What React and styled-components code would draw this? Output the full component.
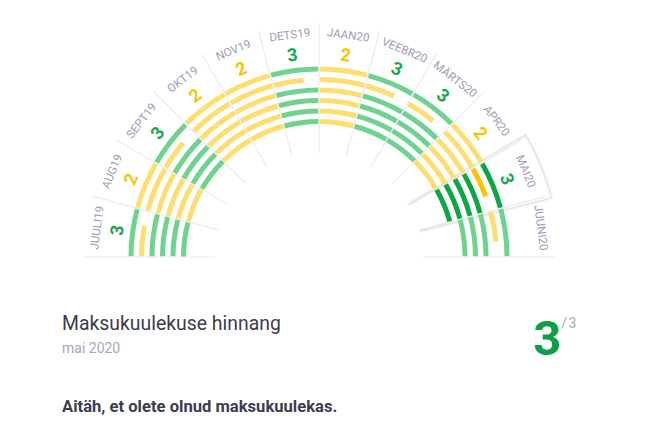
import React from 'react'
import styled, { createGlobalStyle } from 'styled-components'

const GlobalStyle = createGlobalStyle`
  html, body {
    margin: 0;
    padding: 0;
    background: #ffffff;
    font-family: Roboto, 'Liberation Sans', sans-serif;
  }
`

const CX = 319
const CY = 257
const RADII = [188, 177.5, 167, 156.5, 146, 135.5]
const SECTOR = 15
const GAP = 0.25

const COLORS = {
  g: '#6fd28f',
  y: '#ffde70',
  G: '#0aa744',
  Y: '#ffc300',
}

// score 3 -> one short yellow bar, score 2 -> all yellow
const months = [
  { label: 'JUULI19', score: 3 },
  { label: 'AUG19', score: 2 },
  { label: 'SEPT19', score: 3 },
  { label: 'OKT19', score: 2 },
  { label: 'NOV19', score: 2 },
  { label: 'DETS19', score: 3 },
  { label: 'JAAN20', score: 2 },
  { label: 'VEEBR20', score: 3 },
  { label: 'MÄRTS20', score: 3 },
  { label: 'APR20', score: 2 },
  { label: 'MAI20', score: 3, selected: true },
  { label: 'JUUNI20', score: 3, bars: 5, pending: true },
]

const pt = (r, a) => {
  const rad = (a * Math.PI) / 180
  return [CX + r * Math.cos(rad), CY - r * Math.sin(rad)]
}

const arc = (r, a0, a1) => {
  const [x0, y0] = pt(r, a0)
  const [x1, y1] = pt(r, a1)
  return `M${x0} ${y0} A${r} ${r} 0 0 1 ${x1} ${y1}`
}

const line = (a, r0, r1) => {
  const [x0, y0] = pt(r0, a)
  const [x1, y1] = pt(r1, a)
  return `M${x0} ${y0} L${x1} ${y1}`
}

const barsFor = (m) => {
  const count = m.bars || 6
  const list =
    m.score === 3
      ? [
          { c: 'g' },
          { c: 'y', part: true },
          { c: 'g' },
          { c: 'g' },
          { c: 'g' },
          { c: 'g' },
        ]
      : Array.from({ length: 6 }, () => ({ c: 'y' }))
  return list.slice(0, count)
}

const Page = styled.div`
  width: 649px;
  height: 433px;
  display: flex;
  flex-direction: column;
  overflow: hidden;
`

const ChartWrap = styled.div`
  height: 262px;
  svg {
    display: block;
  }
`

const Summary = styled.div`
  display: flex;
  justify-content: space-between;
  align-items: flex-start;
  padding: 50px 71px 0 62px;
`

const Info = styled.div`
  display: flex;
  flex-direction: column;
  gap: 4px;
`

const Title = styled.div`
  font-size: 19.4px;
  line-height: 24px;
  color: #3c3c4e;
`

const DateText = styled.div`
  font-size: 14px;
  line-height: 16px;
  color: #a6a6be;
`

const Score = styled.div`
  display: flex;
  align-items: flex-start;
  font-size: 49px;
  line-height: 46px;
  font-weight: 700;
  color: #0d9f45;
  margin-top: 4px;
`

const OutOf = styled.span`
  font-size: 14px;
  line-height: 12px;
  font-weight: 400;
  letter-spacing: 1.5px;
  color: #a6a6be;
  margin-left: 0;
  margin-top: 1px;
`

const Message = styled.div`
  padding: 35px 62px 0;
  font-size: 16.6px;
  font-weight: 700;
  color: #3c3c4e;
`

const MonthLabel = styled.text`
  font-size: 11.6px;
  fill: #9d9db6;
`

const MonthScore = styled.text`
  font-size: 18px;
  font-weight: 700;
  fill: ${(p) => (p.$score === 3 ? '#13a94d' : '#f7c400')};
`

function Sector({ m, i }) {
  const a0 = 180 - i * SECTOR
  const a1 = a0 - SECTOR
  const mid = a0 - SECTOR / 2
  const [lx, ly] = pt(224, mid)
  const [nx, ny] = pt(204, mid)
  const rot = 90 - mid
  return (
    <g>
      {barsFor(m).map((b, j) => {
        const c = m.selected ? b.c.toUpperCase() : b.c
        const end = b.part ? a0 - 10 : a1 + GAP
        return (
          <path
            key={j}
            d={arc(RADII[j], a0 - GAP, end)}
            stroke={COLORS[c]}
            strokeWidth={5}
            fill='none'
          />
        )
      })}
      {!m.pending && (
        <MonthScore
          $score={m.score}
          x={nx}
          y={ny}
          textAnchor='middle'
          dominantBaseline='central'
          transform={`rotate(${rot} ${nx} ${ny})`}
        >
          {m.score}
        </MonthScore>
      )}
      <MonthLabel
        x={lx}
        y={ly}
        textAnchor='middle'
        dominantBaseline='central'
        transform={`rotate(${rot} ${lx} ${ly})`}
      >
        {m.label}
      </MonthLabel>
    </g>
  )
}

function RatingChart() {
  const dividers = []
  for (let a = 165; a >= 15; a -= SECTOR) dividers.push(a)
  const hi = 30.6
  const lo = 14.2
  const [bx0, by0] = pt(104, hi)
  const [bx1, by1] = pt(240, hi)
  const [bx2, by2] = pt(240, lo)
  const [bx3, by3] = pt(104, lo)
  const box = `M${bx0} ${by0} L${bx1} ${by1} A240 240 0 0 1 ${bx2} ${by2} L${bx3} ${by3}`
  return (
    <svg width='649' height='262' viewBox='0 0 649 262'>
      <defs>
        <filter id='soft' x='-20%' y='-20%' width='140%' height='140%'>
          <feDropShadow dx='0' dy='0' stdDeviation='1.2' floodColor='#000' floodOpacity='0.12' />
        </filter>
      </defs>
      <path d={line(180, 104, 236)} stroke='#ececf0' strokeWidth='1.2' />
      <path d={line(0, 104, 236)} stroke='#ececf0' strokeWidth='1.2' />
      {dividers.map((a) => (
        <path key={a} d={line(a, 104, 234)} stroke='#ececf0' strokeWidth='1.2' />
      ))}
      <path d={box} fill='none' stroke='#e2e2e6' strokeWidth='1.3' filter='url(#soft)' />
      {months.map((m, i) => (
        <Sector key={m.label} m={m} i={i} />
      ))}
    </svg>
  )
}

export default function App() {
  return (
    <>
      <GlobalStyle />
      <Page>
        <ChartWrap>
          <RatingChart />
        </ChartWrap>
        <Summary>
          <Info>
            <Title>Maksukuulekuse hinnang</Title>
            <DateText>mai 2020</DateText>
          </Info>
          <Score>
            3<OutOf>/3</OutOf>
          </Score>
        </Summary>
        <Message>Aitäh, et olete olnud maksukuulekas.</Message>
      </Page>
    </>
  )
}
